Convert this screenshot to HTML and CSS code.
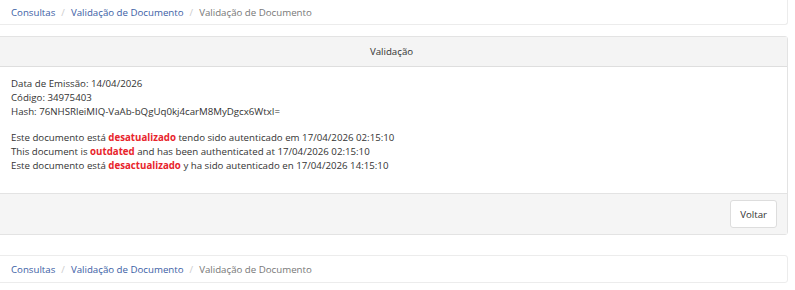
FILE: index.html
```html
<!DOCTYPE html>
<html lang="pt">
<head>
<meta charset="utf-8">
<title>Validação de Documento</title>
<link rel="stylesheet" href="styles.css">
</head>
<body>
<div class="page">
  <nav class="crumbs">
    <a href="#">Consultas</a><span class="sep">/</span><a href="#">Validação de Documento</a><span class="sep">/</span><span class="active">Validação de Documento</span>
  </nav>

  <section class="panel">
    <header class="panel-head">Validação</header>
    <div class="panel-body">
      <p class="info">Data de Emissão: 14/04/2026<br>Código: 34975403<br>Hash: 76NHSRleiMIQ-VaAb-bQgUq0kj4carM8MyDgcx6WtxI=</p>
      <p class="info">Este documento está <strong>desatualizado</strong> tendo sido autenticado em 17/04/2026 02:15:10<br>This document is <strong>outdated</strong> and has been authenticated at 17/04/2026 02:15:10<br>Este documento está <strong>desactualizado</strong> y ha sido autenticado en 17/04/2026 14:15:10</p>
    </div>
    <footer class="panel-foot"><button class="btn" type="button">Voltar</button></footer>
  </section>

  <nav class="crumbs crumbs-bottom">
    <a href="#">Consultas</a><span class="sep">/</span><a href="#">Validação de Documento</a><span class="sep">/</span><span class="active">Validação de Documento</span>
  </nav>
</div>
</body>
</html>
```

FILE: styles.css
```css
* { box-sizing: border-box; }
html, body { margin: 0; padding: 0; background: #fff; }
body {
  font-family: "Open Sans", "DejaVu Sans", sans-serif;
  font-size: 9.7px;
  color: #333;
}
.page {
  margin-left: -5px;
  width: 793px;
  display: flex;
  flex-direction: column;
}
.crumbs {
  height: 25px;
  padding: 0 15px;
  display: flex;
  align-items: center;
  border: 1px solid #ececec;
  border-top: none;
  border-radius: 0 0 3px 3px;
}
.crumbs a { color: #3b5ea5; text-decoration: none; }
.crumbs .sep { color: #ccc; padding: 0 6px; }
.crumbs .active { color: #777; }
.crumbs-bottom {
  margin-top: 20px;
  height: 28px;
  border-top: 1px solid #ececec;
  border-radius: 3px;
}
.panel {
  margin-top: 11px;
  border: 1px solid #e3e3e3;
  border-radius: 3px;
  display: flex;
  flex-direction: column;
}
.panel-head {
  height: 30px;
  background: #f4f4f4;
  border-bottom: 1px solid #dedede;
  display: flex;
  align-items: center;
  justify-content: center;
  color: #333;
}
.panel-body {
  padding: 10px 15px 18px;
  height: 126px;
}
.info { margin: 0 0 12px; line-height: 14px; }
.info strong { color: #e8242b; font-weight: 700; }
.panel-foot {
  background: #f5f5f5;
  border-top: 1px solid #e3e3e3;
  height: 41px;
  display: flex;
  align-items: center;
  justify-content: flex-end;
  padding: 0 10px;
}
.btn {
  font-family: inherit;
  font-size: 9.7px;
  color: #333;
  background: #fff;
  border: 1px solid #ddd;
  border-radius: 3px;
  height: 28px;
  padding: 0 9px;
}
```
